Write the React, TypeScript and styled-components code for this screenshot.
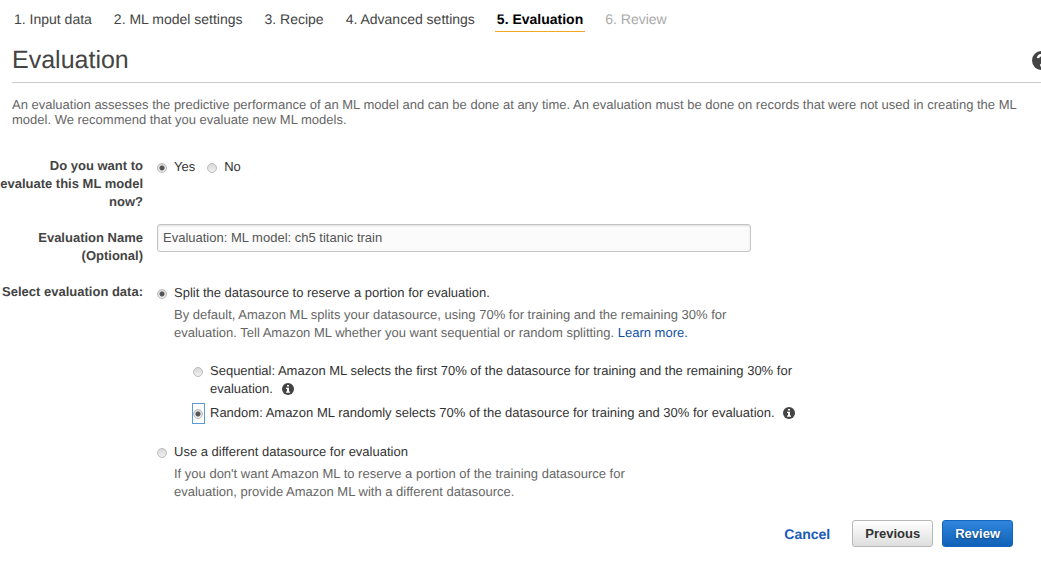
import React, { useState } from "react";
import styled, { createGlobalStyle, css } from "styled-components";

const GlobalStyle = createGlobalStyle`
  *, *::before { box-sizing: border-box; }
  body {
    margin: 0;
    background: #fff;
    color: #444;
    font: 13px/18px "Liberation Sans", Arial, sans-serif;
    text-rendering: geometricPrecision;
  }
`;

const Page = styled.main`
  overflow: hidden;
  padding: 10px 0 24px;
`;

const Steps = styled.nav`
  display: flex;
  gap: 18px;
  padding: 0 12px;
  font-size: 14px;
`;

type StepState = "done" | "current" | "upcoming";

const Step = styled.a<{ $state: StepState }>`
  padding: 0 2px;
  line-height: 18px;
  height: 22px;
  text-decoration: none;
  white-space: nowrap;
  color: #444;
  border-bottom: 1px solid transparent;
  ${({ $state }) =>
    $state === "current" &&
    css`
      color: #000;
      font-weight: bold;
      border-color: #f5a623;
    `}
  ${({ $state }) =>
    $state === "upcoming" &&
    css`
      color: #aaa;
    `}
`;

const Header = styled.header`
  display: flex;
  align-items: center;
  justify-content: space-between;
  margin: 10px 0 0 12px;
  height: 41px;
  padding-bottom: 4px;
  border-bottom: 1px solid #ccc;
`;

const Title = styled.h1`
  margin: 0;
  font-size: 25px;
  line-height: 32px;
  font-weight: normal;
`;

const HelpButton = styled.button`
  flex: none;
  margin-right: -10px;
  padding: 0;
  border: 0;
  background: none;
  display: flex;
`;

const Intro = styled.p`
  margin: 14px 0 0 12px;
  line-height: 15px;
  color: #666;
`;

const Form = styled.form`
  margin-top: 30px;
`;

const Row = styled.div`
  display: grid;
  grid-template-columns: 143px minmax(0, 1fr);
  column-gap: 14px;
`;

const NameRow = styled(Row)`
  margin: 13px 0 18px;
`;

const Label = styled.label<{ $drop?: number }>`
  padding-top: ${({ $drop = 0 }) => $drop}px;
  text-align: right;
  font-weight: bold;
`;

const TextInput = styled.input`
  width: 594px;
  max-width: 100%;
  height: 28px;
  padding: 0 5px 2px;
  border: 1px solid #c4c4c4;
  border-radius: 3px;
  background: #fbfbfb;
  box-shadow: inset 0 1px 2px #ddd;
  color: #555;
  font: inherit;
`;

const Inline = styled.div`
  display: flex;
  gap: 12px;
`;

const Stack = styled.div`
  display: flex;
  flex-direction: column;
`;

const OptionLabel = styled.label`
  display: flex;
  align-items: flex-start;
  gap: 6px;
  padding-top: 1px;
  color: #333;
`;

const Radio = styled.input<{ $outlined?: boolean }>`
  appearance: none;
  flex: none;
  display: flex;
  align-items: center;
  width: 11px;
  height: 19px;
  margin: 0;
  outline: ${({ $outlined }) => ($outlined ? "1px solid #5b9dd9" : "none")};

  &::before {
    content: "";
    width: 10px;
    height: 10px;
    border: 1px solid #bbb;
    border-radius: 50%;
    background: linear-gradient(#d8d8d8, #f0f0f0);
  }

  &:checked::before {
    background: radial-gradient(circle, #555 0 2px, transparent 3px),
      linear-gradient(#d8d8d8, #f0f0f0);
  }
`;

const Note = styled.p<{ $width: number }>`
  margin: 3px 0 0 17px;
  max-width: ${({ $width }) => $width}px;
  color: #666;
`;

const TextLink = styled.a`
  color: #0f4fa8;
  text-decoration: none;
`;

const SubOptions = styled.div`
  display: flex;
  flex-direction: column;
  gap: 5px;
  max-width: 640px;
  margin: 19px 0 19px 36px;
`;

const InfoSvg = styled.svg`
  margin-left: 5px;
  vertical-align: -2px;
`;

const Actions = styled.div`
  display: flex;
  justify-content: flex-end;
  align-items: center;
  gap: 9px;
  margin: 19px 28px 0 0;
`;

const Cancel = styled.a`
  margin-right: 13px;
  color: #1a5bb8;
  font-size: 14px;
  font-weight: bold;
  text-decoration: none;
`;

const Button = styled.button<{ $primary?: boolean }>`
  height: 27px;
  padding: 0 12px;
  border: 1px solid #b7b7b7;
  border-radius: 3px;
  background: linear-gradient(#fff, #dedede);
  color: #333;
  font: bold 13px/18px "Liberation Sans", Arial, sans-serif;
  ${({ $primary }) =>
    $primary &&
    css`
      border-color: #1166bb;
      background: linear-gradient(#2f86dc, #1062b8);
      color: #fff;
      text-shadow: 0 1px 2px #0a3d75;
    `}
`;

const HelpIcon = () => (
  <svg width="19" height="19" viewBox="0 0 19 19" aria-hidden="true">
    <circle cx="9.5" cy="9.5" r="9.5" fill="#444" />
    <path d="M6 7.2C6.2 5 7.6 4.200 9.6 4.200c2.100 0 3.600 1.100 3.600 3 0 2.200-2.800 2.200-2.800 4.300" fill="none" stroke="#fff" strokeWidth="2.400" />
    <rect x="8.200" y="12.900" width="2.600" height="2.600" fill="#fff" />
  </svg>
);

const InfoIcon = () => (
  <InfoSvg width="12" height="12" viewBox="0 0 12 12" role="img" aria-label="More information">
    <circle cx="6" cy="6" r="6" fill="#444" />
    <path d="M5 2h2v1.600H5zM4 4.800h3V8.500h1V9.800H4V8.500h1V6H4z" fill="#fff" />
  </InfoSvg>
);

const steps: { name: string; state: StepState }[] = [
  { name: "1. Input data", state: "done" },
  { name: "2. ML model settings", state: "done" },
  { name: "3. Recipe", state: "done" },
  { name: "4. Advanced settings", state: "done" },
  { name: "5. Evaluation", state: "current" },
  { name: "6. Review", state: "upcoming" },
];

export default function App() {
  const [evaluate, setEvaluate] = useState("yes");
  const [source, setSource] = useState("split");
  const [order, setOrder] = useState("random");
  const [name, setName] = useState("Evaluation: ML model: ch5 titanic train");

  return (
    <>
      <GlobalStyle />
      <Page>
        <Steps aria-label="Steps">
          {steps.map((s) => (
            <Step key={s.name} href="#" $state={s.state} aria-current={s.state === "current" ? "step" : undefined}>
              {s.name}
            </Step>
          ))}
        </Steps>
        <Header>
          <Title>Evaluation</Title>
          <HelpButton type="button" aria-label="Help">
            <HelpIcon />
          </HelpButton>
        </Header>
        <Intro>
          An evaluation assesses the predictive performance of an ML model and can be done at any time. An evaluation
          must be done on records that were not used in creating the ML model. We recommend that you evaluate new ML
          models.
        </Intro>

        <Form onSubmit={(e) => e.preventDefault()}>
          <Row role="radiogroup" aria-labelledby="evaluate-label">
            <Label as="div" id="evaluate-label">
              Do you want to evaluate this ML model now?
            </Label>
            <Inline>
              <OptionLabel>
                <Radio type="radio" name="evaluate" checked={evaluate === "yes"} onChange={() => setEvaluate("yes")} />
                <span>Yes</span>
              </OptionLabel>
              <OptionLabel>
                <Radio type="radio" name="evaluate" checked={evaluate === "no"} onChange={() => setEvaluate("no")} />
                <span>No</span>
              </OptionLabel>
            </Inline>
          </Row>

          <NameRow>
            <Label htmlFor="evaluation-name" $drop={5}>
              Evaluation Name (Optional)
            </Label>
            <TextInput id="evaluation-name" type="text" value={name} onChange={(e) => setName(e.target.value)} />
          </NameRow>

          <Row role="radiogroup" aria-labelledby="source-label">
            <Label as="div" id="source-label">
              Select evaluation data:
            </Label>
            <Stack>
              <OptionLabel>
                <Radio type="radio" name="source" checked={source === "split"} onChange={() => setSource("split")} />
                <span>Split the datasource to reserve a portion for evaluation.</span>
              </OptionLabel>
              <Note $width={560}>
                By default, Amazon ML splits your datasource, using 70% for training and the remaining 30% for
                evaluation. Tell Amazon ML whether you want sequential or random splitting.{" "}
                <TextLink href="#">Learn more.</TextLink>
              </Note>
              <SubOptions>
                <OptionLabel>
                  <Radio type="radio" name="order" checked={order === "sequential"} onChange={() => setOrder("sequential")} />
                  <span>
                    Sequential: Amazon ML selects the first 70% of the datasource for training and the remaining 30%
                    for evaluation. <InfoIcon />
                  </span>
                </OptionLabel>
                <OptionLabel>
                  <Radio type="radio" name="order" $outlined={order === "random"} checked={order === "random"} onChange={() => setOrder("random")} />
                  <span>
                    Random: Amazon ML randomly selects 70% of the datasource for training and 30% for evaluation.{" "}
                    <InfoIcon />
                  </span>
                </OptionLabel>
              </SubOptions>
              <OptionLabel>
                <Radio type="radio" name="source" checked={source === "other"} onChange={() => setSource("other")} />
                <span>Use a different datasource for evaluation</span>
              </OptionLabel>
              <Note $width={480}>
                If you don't want Amazon ML to reserve a portion of the training datasource for evaluation, provide
                Amazon ML with a different datasource.
              </Note>
            </Stack>
          </Row>

          <Actions>
            <Cancel href="#">Cancel</Cancel>
            <Button type="button">Previous</Button>
            <Button type="submit" $primary>
              Review
            </Button>
          </Actions>
        </Form>
      </Page>
    </>
  );
}
